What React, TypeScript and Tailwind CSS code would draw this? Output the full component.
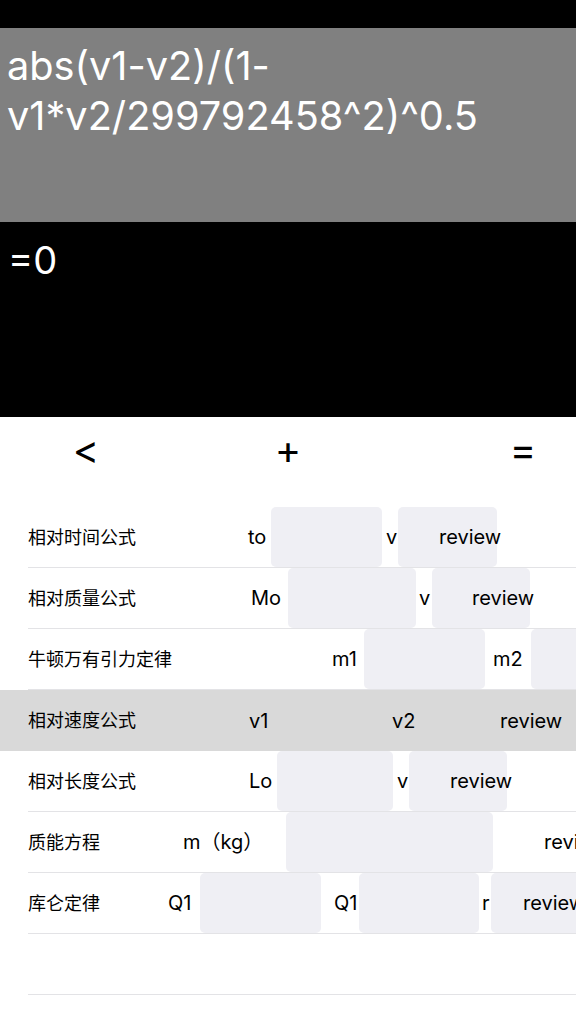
import React from "react";

const font = { fontFamily: 'Inter, "Noto Sans CJK SC", sans-serif' };

function Input({ className }: { className: string }) {
  return <div className={`shrink-0 self-start h-[60px] rounded-[5px] bg-[#efeff4] ${className}`} />;
}

function T({ className, children }: { className: string; children: React.ReactNode }) {
  return <span className={`shrink-0 whitespace-nowrap text-[20px] text-black ${className}`}>{children}</span>;
}

function Row({ children, hl }: { children: React.ReactNode; hl?: boolean }) {
  return (
    <div className={`pl-[28px] ${hl ? "bg-[#d9d9d9]" : "bg-white"}`}>
      <div className={`flex h-[61px] items-center overflow-hidden ${hl ? "" : "border-b border-[#e3e3e6]"}`}>{children}</div>
    </div>
  );
}

function Label({ className, children }: { className: string; children: React.ReactNode }) {
  return <span className={`shrink-0 whitespace-nowrap text-[18px] text-black ${className}`}>{children}</span>;
}

export default function App() {
  return (
    <div className="w-[576px] h-[1024px] overflow-hidden bg-white" style={font}>
      <div className="h-[28px] bg-black" />
      <div className="h-[194px] bg-[#808080] px-[7px] pt-[13px] text-[39.7px] leading-[50px] text-white">
        abs(v1-v2)/(1-v1*v2/299792458^2)^0.5
      </div>
      <div className="h-[195px] bg-black px-[8px] pt-[13px] text-[38px] leading-[50px] text-white">=0</div>
      <div className="flex h-[90px] items-center pb-[25px] pl-[46px] text-[40px] leading-none text-black">
        <span className="w-[80px] text-center">&lt;</span>
        <span className="ml-[122px] w-[80px] text-center">+</span>
        <span className="ml-[155px] w-[80px] text-center">=</span>
      </div>

      <Row>
        <Label className="w-[220px]">相对时间公式</Label>
        <T className="w-[23px]">to</T>
        <Input className="w-[111px]" />
        <T className="ml-[4px] w-[12px]">v</T>
        <Input className="w-[99px]" />
        <T className="ml-[-58px]">review</T>
      </Row>
      <Row>
        <Label className="w-[223px]">相对质量公式</Label>
        <T className="w-[37px]">Mo</T>
        <Input className="w-[128px]" />
        <T className="ml-[3px] w-[13px]">v</T>
        <Input className="w-[98px]" />
        <T className="ml-[-58px]">review</T>
      </Row>
      <Row>
        <Label className="w-[304px]">牛顿万有引力定律</Label>
        <T className="w-[32px]">m1</T>
        <Input className="w-[121px]" />
        <T className="ml-[8px] w-[38px]">m2</T>
        <Input className="w-[100px]" />
      </Row>
      <Row hl>
        <Label className="w-[221px]">相对速度公式</Label>
        <T className="w-[143px]">v1</T>
        <T className="w-[108px]">v2</T>
        <T className="">review</T>
      </Row>
      <Row>
        <Label className="w-[221px]">相对长度公式</Label>
        <T className="w-[28px]">Lo</T>
        <Input className="w-[116px]" />
        <T className="ml-[4px] w-[12px]">v</T>
        <Input className="w-[98px]" />
        <T className="ml-[-57px]">review</T>
      </Row>
      <Row>
        <Label className="w-[155px]">质能方程</Label>
        <T className="w-[103px]">m（kg）</T>
        <Input className="w-[207px]" />
        <T className="ml-[51px]">review</T>
      </Row>
      <Row>
        <Label className="w-[140px]">库仑定律</Label>
        <T className="w-[32px]">Q1</T>
        <Input className="w-[121px]" />
        <T className="ml-[13px] w-[25px]">Q1</T>
        <Input className="w-[120px]" />
        <T className="ml-[3px] w-[9px]">r</T>
        <Input className="w-[100px]" />
        <T className="ml-[-68px]">review</T>
      </Row>
      <Row>
        <span />
      </Row>
    </div>
  );
}
